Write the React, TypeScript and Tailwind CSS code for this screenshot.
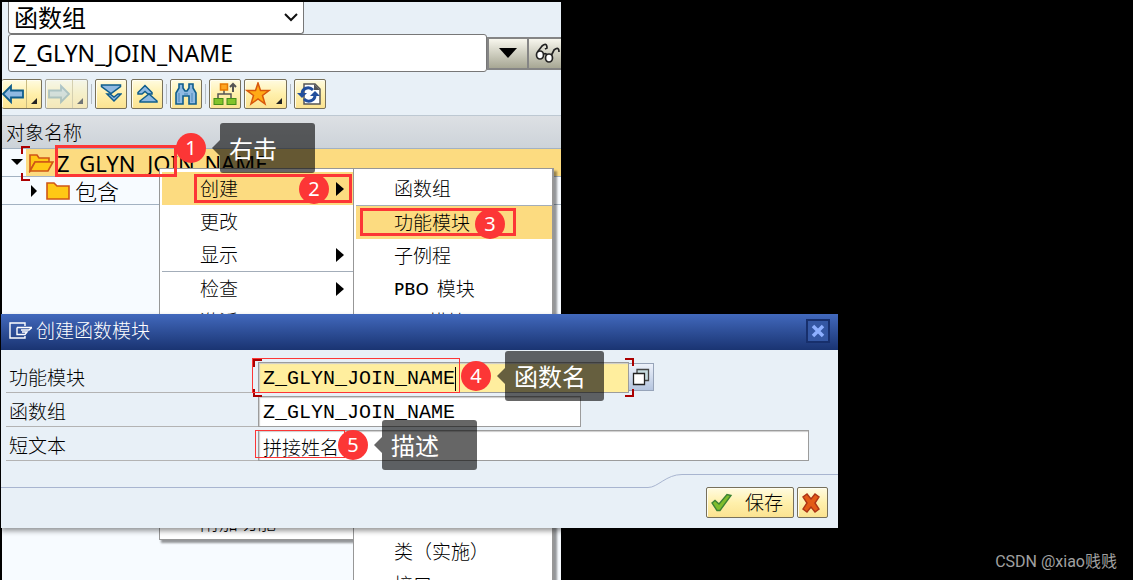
import type { ReactNode } from "react";
import clsx from "clsx";

const sans = "font-['Noto_Sans','Noto_Sans_CJK_SC',sans-serif]";
const goldButton =
  "flex h-[30px] shrink-0 items-center rounded-[2px] border border-[#77705a] bg-linear-to-b from-[#fffbe0] via-[#fff0ac] to-[#fbe391] shadow-[inset_1px_1px_0_#fffdf0]";

type MenuItem = {
  label: string;
  prefix?: string;
  active?: boolean;
  submenu?: boolean;
  divider?: boolean;
};

const actionItems: MenuItem[] = [
  { label: "创建", active: true, submenu: true },
  { label: "更改" },
  { label: "显示", submenu: true, divider: true },
  { label: "检查", submenu: true },
  { label: "激活" },
];

const createItems: MenuItem[] = [
  { label: "函数组", divider: true },
  { label: "功能模块", active: true },
  { label: "子例程" },
  { label: "模块", prefix: "PBO" },
  { label: "模块", prefix: "PAI" },
];

function ArrowIcon({ right, faded }: { right?: boolean; faded?: boolean }) {
  return (
    <svg
      viewBox="0 0 24 22"
      className={clsx("h-[22px] w-6", right && "-scale-x-100", faded && "opacity-50")}
      aria-hidden="true"
    >
      <path
        d="M1 11 L9 3 V7.5 H21 V14.5 H9 V19 Z"
        fill="#8fb9e2"
        stroke="#0f5d8c"
        strokeWidth="1.8"
      />
    </svg>
  );
}

function ExpandIcon() {
  return (
    <svg viewBox="0 0 22 22" className="size-[22px]" aria-hidden="true">
      <g fill="#8fb9e2" stroke="#0f5d8c" strokeWidth="1.5">
        <path d="M7 11 H10 L14 14 L18 11 H21 L14 18 Z" />
        <path d="M1.5 2 H20.5 V3.5 L11 10.5 L1.5 3.5 Z" />
      </g>
    </svg>
  );
}

function CollapseIcon() {
  return (
    <svg viewBox="0 0 22 22" className="size-[22px]" aria-hidden="true">
      <g fill="#8fb9e2" stroke="#0f5d8c" strokeWidth="1.5">
        <path d="M2 9.5 L9 2.5 L16 9.5 V11 H12 L9 8.5 L6 11 H2 Z" />
        <path d="M4 18 L13 11 L21 18 V19 H4 Z" />
      </g>
    </svg>
  );
}

function BinocularsIcon() {
  return (
    <svg viewBox="0 0 22 24" className="h-6 w-[22px]" aria-hidden="true">
      <path
        d="M4 2 H8 V6 L10 9 H12 L14 6 V2 H18 V6 L21 11 V22 H14 V14 H8 V22 H1 V11 L4 6 Z"
        fill="#8fb9e2"
        stroke="#0f5d8c"
        strokeWidth="1.6"
      />
      <path d="M4 11 V20 M17 11 V20 M9 12 H13" stroke="#4b87bb" fill="none" />
    </svg>
  );
}

function HierarchyIcon() {
  return (
    <svg viewBox="0 0 26 24" className="h-6 w-[26px]" aria-hidden="true">
      <path d="M12 8 V12 M6 16 V12 H19 V16" fill="none" stroke="#555" strokeWidth="1.5" />
      <rect x="8.5" y="2" width="7" height="6" fill="#ffa51f" stroke="#e77900" strokeWidth="1.5" />
      <rect x="2" y="16.5" width="9" height="6" fill="#82c32b" stroke="#438c19" />
      <rect x="15" y="16.5" width="9" height="6" fill="#82c32b" stroke="#438c19" />
      <path d="M21 10 V2 M18 5 L21 2 L24 5" fill="none" stroke="#555" strokeWidth="2" />
    </svg>
  );
}

function StarIcon() {
  return (
    <svg viewBox="0 0 26 24" className="h-6 w-[26px]" aria-hidden="true">
      <path
        d="M13 1 L15.5 8.5 H24 L17.5 13.5 L20 22 L13 17 L6 22 L8.5 13.5 L2 8.5 H10.5 Z"
        fill="#ffaa16"
        stroke="#d8570b"
        strokeWidth="1.5"
      />
    </svg>
  );
}

function RefreshIcon() {
  return (
    <svg viewBox="0 0 26 24" className="h-6 w-[26px]" aria-hidden="true">
      <path d="M7 2 H18 L23 7 V22 H7 Z" fill="#fff" stroke="#555" strokeWidth="1.5" />
      <path d="M17 2 L23 8 H17 Z" fill="#555" />
      <path d="M5 12 C5 6 12 4 16 8" fill="none" stroke="#234f9d" strokeWidth="3" />
      <path d="M0 11 H10 L5 16 Z" fill="#234f9d" />
      <path d="M18 13 C18 19 11 21 7 17" fill="none" stroke="#234f9d" strokeWidth="3" />
      <path d="M13 14 H23 L18 9 Z" fill="#234f9d" />
    </svg>
  );
}

function GlassesIcon() {
  return (
    <svg viewBox="0 0 28 22" className="h-[22px] w-7 shrink-0" aria-hidden="true">
      <g fill="#fff" stroke="#222" strokeWidth="1.7">
        <ellipse cx="5" cy="13" rx="3.5" ry="4" />
        <ellipse cx="14" cy="16" rx="3.5" ry="4" />
        <path d="M8.5 12 Q11 11 12 13" fill="none" />
        <path d="M2.5 10 L7 4 Q12 0 12 6 L10 7" fill="none" />
        <path d="M16.5 13 L19 8 Q24 4 24 10" fill="none" />
      </g>
    </svg>
  );
}

function FolderIcon({ open }: { open?: boolean }) {
  return (
    <svg viewBox="0 0 26 20" className="h-5 w-[26px] shrink-0" aria-hidden="true">
      <path
        d={open ? "M2 18 V2 H9 L11 5 H21 V9 H7 Z" : "M2 18 V2 H9 L12 5 H24 V18 Z"}
        fill="#ffc815"
        stroke="#cf5617"
        strokeWidth="1.6"
      />
      {open && (
        <path d="M2 18 L7 9 H25 L20 18 Z" fill="#ffc815" stroke="#cf5617" strokeWidth="1.6" />
      )}
    </svg>
  );
}

function CornerMark() {
  return (
    <svg viewBox="0 0 6 6" className="absolute right-1 bottom-1 size-1.5" aria-hidden="true">
      <path d="M6 0 V6 H0 Z" fill="#222" />
    </svg>
  );
}

function ToolSeparator() {
  return <span className="mx-px mt-[5px] h-5 w-px shrink-0 bg-[#b5bcc2]" />;
}

function ToolButton({ label, children }: { label: string; children: ReactNode }) {
  return (
    <button type="button" aria-label={label} className={clsx(goldButton, "w-8 justify-center")}>
      {children}
    </button>
  );
}

function MenuRow({ label, prefix, active, submenu, divider }: MenuItem) {
  return (
    <li className={clsx("shrink-0", divider && "border-b border-[#a3adb9]")}>
      <button
        type="button"
        className={clsx(
          "flex h-[33px] w-full items-center pr-[9px] pl-[38px] text-left",
          active && "bg-[#fcdb80]",
        )}
      >
        {prefix && <span className="mr-2 text-[17px] font-medium">{prefix}</span>}
        <span className="flex-1">{label}</span>
        {submenu && (
          <svg viewBox="0 0 8 14" className="h-[14px] w-2" aria-hidden="true">
            <path d="M0 0 L8 7 L0 14 Z" />
          </svg>
        )}
      </button>
    </li>
  );
}

type ContextMenuProps = {
  items: MenuItem[];
  bottomItems: MenuItem[];
  className: string;
};

function ContextMenu({ items, bottomItems, className }: ContextMenuProps) {
  return (
    <div
      className={clsx(
        "absolute flex flex-col justify-between border border-[#979797] bg-white pt-[3px] pl-0.5 text-[19px] leading-6 font-light text-black",
        className,
      )}
    >
      <ul>
        {items.map((item) => (
          <MenuRow key={item.prefix ?? item.label} {...item} />
        ))}
      </ul>
      <ul>
        {bottomItems.map((item) => (
          <MenuRow key={item.label} {...item} />
        ))}
      </ul>
    </div>
  );
}

function Badge({ value, className }: { value: number; className: string }) {
  return (
    <span
      className={clsx(
        "absolute flex size-[30px] items-center justify-center rounded-full bg-[#fc3636] text-[20px] leading-none text-white",
        className,
      )}
    >
      {value}
    </span>
  );
}

function Callout({ text, className }: { text: string; className: string }) {
  return (
    <span
      className={clsx(
        "absolute flex h-[50px] items-center rounded-[3px] bg-black/60 pt-0.5 pl-[9px] text-[24px] leading-none text-white",
        className,
      )}
    >
      <svg viewBox="0 0 8 16" className="absolute top-[17px] -left-2 h-4 w-2" aria-hidden="true">
        <path d="M8 0 V16 L0 8 Z" fill="#000" fillOpacity="0.6" />
      </svg>
      {text}
    </span>
  );
}

// Dark red corners around the focused field
function FocusCorners({ className, rightSide }: { className: string; rightSide?: boolean }) {
  return (
    <span
      className={clsx(
        "pointer-events-none absolute flex w-[9px] flex-col justify-between",
        className,
      )}
    >
      <i className={clsx("h-2 border-t-2 border-[#ab0000]", rightSide ? "border-r-2" : "border-l-2")} />
      <i className={clsx("h-2 border-b-2 border-[#ab0000]", rightSide ? "border-r-2" : "border-l-2")} />
    </span>
  );
}

function ObjectBrowser() {
  return (
    <section className="flex w-full max-w-[559px] flex-col overflow-hidden bg-[#f7fbff]">
      <div className="bg-[#e8f0f7]">
        <div className="relative ml-1.5 h-8 w-[296px]">
          <select
            aria-label="对象类型"
            className="h-8 w-full appearance-none rounded-b-[3px] border border-t-0 border-[#777] bg-white pl-[5px] text-[24px] leading-[30px]"
          >
            <option>函数组</option>
          </select>
          <svg viewBox="0 0 14 9" className="pointer-events-none absolute top-[11px] right-[6px] h-[9px] w-[14px]" aria-hidden="true">
            <path d="M1 1 L7 7 L13 1" fill="none" stroke="#111" strokeWidth="2" />
          </svg>
        </div>
        <div className="flex items-center pl-1.5">
          <input
            aria-label="对象名称"
            defaultValue="Z_GLYN_JOIN_NAME"
            className="h-[38px] w-[479px] shrink-0 rounded-[3px] border border-[#777] bg-white px-1 text-[23px]"
          />
          <button
            type="button"
            aria-label="历史记录"
            className="flex h-[33px] w-[42px] shrink-0 items-center justify-center border-2 border-[#858585] bg-linear-to-b from-[#f8f7ee] to-[#a7a794]"
          >
            <svg viewBox="0 0 18 10" className="h-[10px] w-[18px]" aria-hidden="true">
              <path d="M0 0 H18 L9 10 Z" />
            </svg>
          </button>
          <button
            type="button"
            aria-label="显示"
            className="flex h-[33px] w-[42px] shrink-0 items-center border-y-2 border-[#858585] bg-linear-to-b from-[#f8f7ee] to-[#a7a794] pl-1.5"
          >
            <GlassesIcon />
          </button>
        </div>
        <div className="mt-[7px] flex h-[37px] items-start gap-0.5 border-b border-[#bdc8d2]">
          <button type="button" aria-label="后退" className={clsx(goldButton, "relative w-10 border-l-0")}>
            <ArrowIcon />
            <span className="absolute right-0 bottom-0 h-full w-[15px] border-l border-[#c9bb81]">
              <CornerMark />
            </span>
          </button>
          <button type="button" aria-label="前进" className={clsx(goldButton, "relative ml-px w-[43px] opacity-60")}>
            <ArrowIcon right faded />
            <span className="absolute right-0 bottom-0 h-full w-[15px] border-l border-[#c9bb81]">
              <CornerMark />
            </span>
          </button>
          <ToolSeparator />
          <ToolButton label="全部展开">
            <ExpandIcon />
          </ToolButton>
          <span />
          <ToolButton label="全部折叠">
            <CollapseIcon />
          </ToolButton>
          <ToolSeparator />
          <ToolButton label="查找">
            <BinocularsIcon />
          </ToolButton>
          <ToolSeparator />
          <ToolButton label="层次">
            <HierarchyIcon />
          </ToolButton>
          <button type="button" aria-label="收藏夹" className={clsx(goldButton, "relative ml-px w-[43px]")}>
            <StarIcon />
            <CornerMark />
          </button>
          <ToolSeparator />
          <ToolButton label="刷新">
            <RefreshIcon />
          </ToolButton>
        </div>
      </div>

      <h2 className="flex h-[33px] shrink-0 items-center border-b border-[#a3b2c2] bg-linear-to-b from-[#dde0e4] to-[#cdd3d9] pt-0.5 pl-1 text-[19px] leading-6 font-light">
        对象名称
      </h2>
      <div className="relative flex h-7 shrink-0 border-b border-[#a3b2c2]">
        <div className="flex w-6 shrink-0 justify-center pt-[10px] pl-1.5">
          <svg viewBox="0 0 12 6" className="h-1.5 w-3" aria-hidden="true">
            <path d="M0 0 H12 L6 6 Z" />
          </svg>
        </div>
        <FocusCorners className="-top-[3px] left-[19px] h-[35px]" />
        <div className="flex min-w-0 flex-1 items-center gap-[3px] bg-[#fcdb80] pl-0.5 text-[22px] leading-7">
          <FolderIcon open />
          <span>Z_GLYN_JOIN_NAME</span>
        </div>
      </div>
      <div className="flex h-7 shrink-0 items-center border-b border-[#a3b2c2] pl-[29px]">
        <svg viewBox="0 0 6 12" className="h-3 w-1.5" aria-hidden="true">
          <path d="M0 0 L6 6 L0 12 Z" />
        </svg>
        <span className="ml-2 flex items-center gap-1 text-[22px] leading-7 font-light">
          <FolderIcon />
          包含
        </span>
      </div>
    </section>
  );
}

function FieldRow({ id, label, children }: { id: string; label: string; children: ReactNode }) {
  return (
    <div className="flex h-[34px] items-start pl-[5px]">
      <label
        htmlFor={id}
        className="flex h-[31px] w-[252px] shrink-0 items-center border-b border-[#b3b3b3] pt-0.5 pl-[3px] text-[19px] leading-6 font-light"
      >
        {label}
      </label>
      {children}
    </div>
  );
}

const fieldClass =
  "h-[31px] min-w-0 border border-[#9c9c9c] px-1 pt-0.5 shadow-[inset_1px_1px_1px_#ccc] outline-none";

function CreateDialog() {
  return (
    <form
      role="dialog"
      aria-label="创建函数模块"
      className="absolute top-[314px] left-px w-full max-w-[837px] bg-[#e8f0f7] text-black shadow-[0_3px_5px_rgba(0,0,0,0.4)]"
    >
      <header className="flex h-9 items-center bg-linear-to-b from-[#4269bd] to-[#1a3472] px-2 pb-0.5 text-white">
        <svg viewBox="0 0 24 18" className="h-[18px] w-6" aria-hidden="true">
          <path
            d="M16 4 V1 H1 V16 H16 V14 M8 5.5 H23 M23 5.5 L20 8 H16 M8 5.5 V12.5 H16 L18 10 H13 M16 8 H12"
            fill="none"
            stroke="#fff"
            strokeWidth="1.4"
          />
        </svg>
        <h1 className="ml-[3px] flex-1 text-[19px] leading-6 font-light">创建函数模块</h1>
        <button
          type="button"
          aria-label="关闭"
          className="flex size-6 items-center justify-center border-2 border-[#172f6c] bg-[#3457a3]"
        >
          <svg viewBox="0 0 14 14" className="size-[14px]" aria-hidden="true">
            <path d="M2 2 L12 12 M12 2 L2 12" stroke="#8eb0ff" strokeWidth="3.5" />
          </svg>
        </button>
      </header>

      <div className="pt-3">
        <FieldRow id="module" label="功能模块">
          <input
            id="module"
            defaultValue="Z_GLYN_JOIN_NAME"
            className={clsx(fieldClass, "w-[371px] bg-[#ffee9e] font-['Liberation_Mono',monospace] text-[20px]")}
          />
          <button
            type="button"
            aria-label="搜索帮助"
            className="mt-px flex h-7 w-[25px] shrink-0 items-center justify-center border border-l-0 border-[#97a4b9] bg-linear-to-b from-[#edf2fb] to-[#b5c5df]"
          >
            <svg viewBox="0 0 18 18" className="size-[18px]" aria-hidden="true">
              <path d="M5 1.5 H16.5 V12.5 H5 Z" fill="#c7dce0" stroke="#444" strokeWidth="1.3" />
              <path d="M1.5 5.5 H12.5 V16.5 H1.5 Z" fill="#fff" stroke="#222" strokeWidth="1.3" />
            </svg>
          </button>
        </FieldRow>
        <FieldRow id="group" label="函数组">
          <input
            id="group"
            defaultValue="Z_GLYN_JOIN_NAME"
            className={clsx(fieldClass, "w-[323px] bg-white font-['Liberation_Mono',monospace] text-[20px]")}
          />
        </FieldRow>
        <FieldRow id="description" label="短文本">
          <input
            id="description"
            defaultValue="拼接姓名"
            className={clsx(fieldClass, "w-[551px] bg-white text-[19px] font-light")}
          />
        </FieldRow>
      </div>

      <footer className="pt-[10px] pb-[10px]">
        <div className="flex h-[14px]">
          <span className="flex-1 border-b border-[#a8b5d0]" />
          <svg viewBox="0 0 34 14" className="h-[14px] w-[34px]" aria-hidden="true">
            <path d="M0 13.5 C10 13.5 18 0.5 34 0.5" fill="none" stroke="#a8b5d0" />
          </svg>
          <span className="w-[156px] border-t border-[#a8b5d0]" />
        </div>
        <div className="-mt-px flex justify-end gap-[3px] pr-[10px]">
          <button
            type="submit"
            className={clsx(goldButton, "h-[31px] w-[88px] gap-3 pl-1 text-[19px] leading-6 font-light")}
          >
            <svg viewBox="0 0 22 20" className="h-5 w-[22px]" aria-hidden="true">
              <path
                d="M1 10 L4 7.5 L8 11 L16 1.5 L20 2.5 L9 17.5 H6 Z"
                fill="#7fbd2d"
                stroke="#3c8235"
                strokeWidth="1.4"
              />
            </svg>
            保存
          </button>
          <button type="button" aria-label="取消" className={clsx(goldButton, "h-[31px] w-[31px] pl-1")}>
            <svg viewBox="0 0 18 20" className="h-5 w-[18px]" aria-hidden="true">
              <path
                d="M5 1 L9 6 L13 1 L17 4 L13 10 L17 16 L13 19 L9 14 L5 19 L1 16 L5 10 L1 4 Z"
                fill="#e35b16"
                stroke="#ac3417"
                strokeWidth="1.4"
              />
            </svg>
          </button>
        </div>
      </footer>

      <FocusCorners className="top-[45px] left-[252px] h-[38px]" />
      <FocusCorners className="top-[44px] left-[624px] h-[39px]" rightSide />
      <span className="absolute top-[44px] left-[251px] h-[35px] w-[208px] border border-[#fc3636]" />
      <span className="absolute top-[53px] left-[454px] h-6 w-px bg-black" />
      <span className="absolute top-[116px] left-[254px] h-7 w-[90px] border border-[#fc3636]" />
      <Badge value={4} className="top-[47px] left-[460px]" />
      <Callout text="函数名" className="top-[37px] left-[504px] w-[99px]" />
      <Badge value={5} className="top-[116px] left-[337px]" />
      <Callout text="描述" className="top-[106px] left-[381px] w-[95px]" />
    </form>
  );
}

export default function App() {
  return (
    <main className={clsx("relative flex h-screen overflow-hidden bg-black pt-0.5 pl-0.5 text-black", sans)}>
      <ObjectBrowser />

      <ContextMenu
        items={actionItems}
        bottomItems={[{ label: "附加功能" }]}
        className="top-[168px] left-[159px] h-[372px] w-[195px] shadow-[2px_3px_2px_rgba(0,0,0,0.4)]"
      />
      <ContextMenu
        items={createItems}
        bottomItems={[{ label: "类（实施）" }, { label: "接口" }]}
        className="top-[168px] left-[353px] h-[434px] w-[201px] border-r-2 shadow-[3px_3px_2px_rgba(0,0,0,0.4)]"
      />

      <span className="absolute top-[145px] left-[55px] h-8 w-[122px] border-3 border-[#fc3636]" />
      <span className="absolute top-[174px] left-[194px] h-[29px] w-[158px] border-3 border-[#fc3636]" />
      <span className="absolute top-[208px] left-[360px] h-[28px] w-[156px] border-3 border-[#fc3636]" />
      <Badge value={1} className="top-[133px] left-[176px]" />
      <Badge value={2} className="top-[174px] left-[299px]" />
      <Badge value={3} className="top-[209px] left-[475px]" />
      <Callout text="右击" className="top-[123px] left-[220px] w-[95px]" />

      <CreateDialog />

      <p className="absolute right-4 bottom-1.5 font-[Roboto,'Noto_Sans_CJK_SC',sans-serif] text-[16px] leading-6 text-[#a0a0a0]">
        CSDN @xiao贱贱
      </p>
    </main>
  );
}
